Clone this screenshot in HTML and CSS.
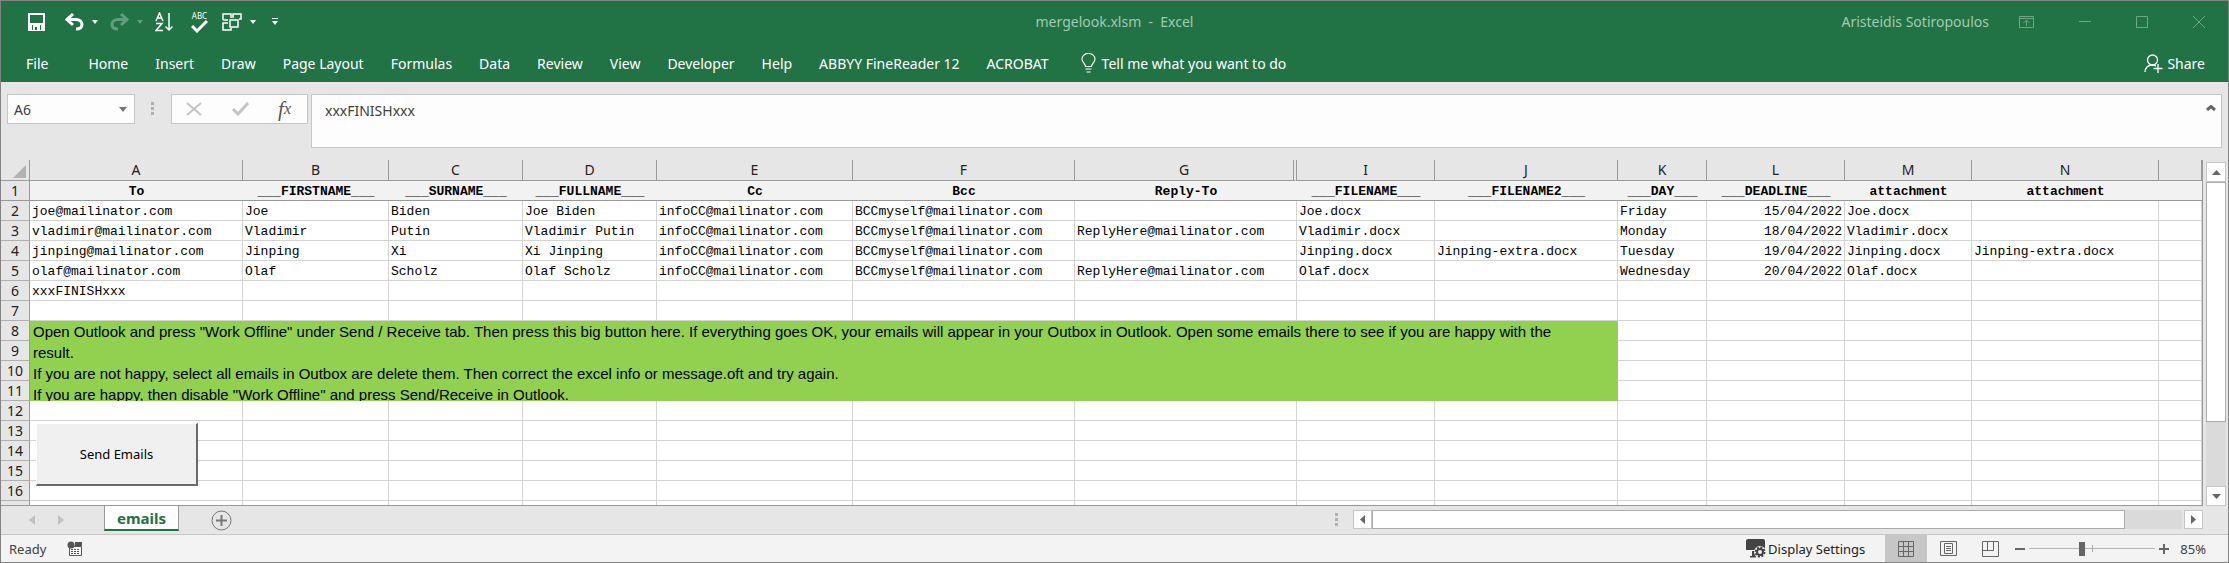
FILE: index.html
```html
<!DOCTYPE html>
<html lang="en">
<head>
<meta charset="utf-8">
<title>mergelook.xlsm - Excel</title>
<link rel="stylesheet" href="styles.css">
</head>
<body>
<div class="window">
  <header class="ribbon">
    <div class="titlebar">
      <div class="quick">
        <button class="ic" aria-label="Save"><svg width="17" height="18" viewBox="0 0 17 18" fill="none" stroke="#fff" stroke-width="2"><path d="M1 1h15v16H1z"/><path d="M2 10h13v7H2z" fill="#fff" stroke="none"/><path d="M4 12h9v5H4z" fill="#217346" stroke="none"/><path d="M5 12h7v5H9v-3H7v3H5z" fill="#fff" stroke="none"/></svg></button>
        <button class="ic undo" aria-label="Undo"><svg width="19" height="18" viewBox="0 0 19 18" fill="none" stroke="#fff" stroke-width="3"><path d="M2 6.500h9c3.500 0 6 2 6 5s-2 4.500-6 4.500"/><path d="M8 1L2 6.500l6 5.500"/></svg></button>
        <button class="caret" aria-label="Undo list"><svg width="6" height="4"><path d="M0 0h6l-3 4z" fill="#fff"/></svg></button>
        <button class="ic redo dim" aria-label="Redo"><svg width="19" height="18" viewBox="0 0 19 18" fill="none" stroke="#fff" stroke-width="3"><path d="M17 6.500H8c-3.500 0-6 2-6 5s2 4.500 6 4.500"/><path d="M11 1l6 5.500-6 5.500"/></svg></button>
        <button class="caret dim" aria-label="Redo list"><svg width="6" height="4"><path d="M0 0h6l-3 4z" fill="#fff"/></svg></button>
        <button class="ic sort" aria-label="Sort A to Z"><svg width="18" height="20" viewBox="0 0 18 20" fill="none" stroke="#fff" stroke-width="1.5"><path d="M1 9l3.500-8L8 9M2 6h5M1 11.500h6L1 18.500h7M14 1v17M10.500 14.500L14 18l3.500-3.500"/></svg></button>
        <button class="ic spell" aria-label="Spelling"><span>ABC</span><svg width="17" height="13" viewBox="0 0 17 13" fill="none" stroke="#fff" stroke-width="3"><path d="M1 6l5 5L16 1"/></svg></button>
        <button class="ic" aria-label="Switch windows"><svg width="20" height="18" viewBox="0 0 20 18" fill="none" stroke="#fff" stroke-width="1.500"><path d="M1 7V1h8v4M11 5V1h8v5h-2M8 7h8v7H8zM6 10H1v7h8v-2M1 7h5"/></svg></button>
        <button class="caret" aria-label="Window list"><svg width="6" height="4"><path d="M0 0h6l-3 4z" fill="#fff"/></svg></button>
        <button class="caret more" aria-label="Customize toolbar"><svg width="6" height="7"><path d="M0 0h6v1H0zM0 3h6l-3 4z" fill="#fff"/></svg></button>
      </div>
      <div class="doc">mergelook.xlsm&nbsp; -&nbsp; Excel</div>
      <div class="wincontrols">
        <span class="user">Aristeidis Sotiropoulos</span>
        <button aria-label="Ribbon display"><svg width="15" height="12" fill="none" stroke="#6da886"><path d="M.5.5h14v11H.5zM0 2.500h15M7.500 10V4M4.500 7l3-3 3 3"/></svg></button>
        <button aria-label="Minimize"><svg width="12" height="12" stroke="#6da886"><path d="M0 5.500h12"/></svg></button>
        <button aria-label="Maximize"><svg width="12" height="12" fill="none" stroke="#6da886"><path d="M.5.5h11v11H.5z"/></svg></button>
        <button aria-label="Close"><svg width="12" height="12" stroke="#6da886"><path d="M0 0l12 12M12 0L0 12"/></svg></button>
      </div>
    </div>
    <nav class="tabs">
      <button>File</button><button>Home</button><button>Insert</button><button>Draw</button><button>Page Layout</button><button>Formulas</button><button>Data</button><button>Review</button><button>View</button><button>Developer</button><button>Help</button><button>ABBYY FineReader 12</button><button>ACROBAT</button>
      <button class="tell"><svg width="15" height="20" viewBox="0 0 15 20" fill="none" stroke="#fff" stroke-width="1.200"><path d="M4.500 13.500c0-3-3.500-4-3.500-7.500a6.500 5.500 0 0 1 13 0c0 3.500-3.500 4.500-3.500 7.500zM4.500 16h6M5.500 19h4"/></svg>Tell me what you want to do</button>
      <button class="share"><svg width="19" height="19" viewBox="0 0 19 19" fill="none" stroke="#fff" stroke-width="1.300"><circle cx="8.500" cy="6" r="5"/><path d="M1 18c0-4 3-7 7-7 2 0 3 .5 4 1M14 10v9M9.500 14.500h9"/></svg>Share</button>
    </nav>
  </header>
  <section class="formulabar">
    <div class="namebox"><input aria-label="Name box" value="A6"><svg width="8" height="5"><path d="M0 0h8L4 5z" fill="#777"/></svg></div>
    <div class="grip"><i></i><i></i><i></i></div>
    <div class="fxbox">
      <button aria-label="Cancel"><svg width="16" height="14" fill="none" stroke="#c4c4c4" stroke-width="2"><path d="M1 1l14 12M15 1L1 13"/></svg></button>
      <button aria-label="Enter"><svg width="17" height="14" fill="none" stroke="#c4c4c4" stroke-width="3"><path d="M1 7l5 5L16 1"/></svg></button>
      <button class="fx" aria-label="Insert function">f<sub>x</sub></button>
    </div>
    <div class="formula"><input aria-label="Formula" value="xxxFINISHxxx"><svg width="10" height="6" fill="none" stroke="#666" stroke-width="3"><path d="M1 5l4-3.500L9 5"/></svg></div>
  </section>
  <main class="main">
    <div class="sheet">
      <table class="grid">
        <colgroup><col class="c0"><col class="ca"><col class="cb"><col class="cc"><col class="cc"><col class="ce"><col class="cf"><col class="cf"><col class="ci"><col class="cj"><col class="ck"><col class="ci"><col class="cm"><col class="cn"><col></colgroup>
        <thead>
          <tr class="letters"><th class="corner"><svg width="13" height="13"><path d="M13 0v13H0z" fill="#b2b2b2"/></svg></th><th>A</th><th>B</th><th>C</th><th>D</th><th>E</th><th>F</th><th class="hid">G</th><th>I</th><th>J</th><th>K</th><th>L</th><th>M</th><th>N</th><th></th></tr>
          <tr class="names"><th>1</th><th>To</th><th>___FIRSTNAME___</th><th>___SURNAME___</th><th>___FULLNAME___</th><th>Cc</th><th>Bcc</th><th>Reply-To</th><th>___FILENAME___</th><th>___FILENAME2___</th><th>___DAY___</th><th>___DEADLINE___</th><th>attachment</th><th>attachment</th><th></th></tr>
        </thead>
        <tbody>
          <tr><th>2</th><td>joe@mailinator.com</td><td>Joe</td><td>Biden</td><td>Joe Biden</td><td>infoCC@mailinator.com</td><td>BCCmyself@mailinator.com</td><td></td><td>Joe.docx</td><td></td><td>Friday</td><td class="r">15/04/2022</td><td>Joe.docx</td><td></td><td></td></tr>
          <tr><th>3</th><td>vladimir@mailinator.com</td><td>Vladimir</td><td>Putin</td><td>Vladimir Putin</td><td>infoCC@mailinator.com</td><td>BCCmyself@mailinator.com</td><td>ReplyHere@mailinator.com</td><td>Vladimir.docx</td><td></td><td>Monday</td><td class="r">18/04/2022</td><td>Vladimir.docx</td><td></td><td></td></tr>
          <tr><th>4</th><td>jinping@mailinator.com</td><td>Jinping</td><td>Xi</td><td>Xi Jinping</td><td>infoCC@mailinator.com</td><td>BCCmyself@mailinator.com</td><td></td><td>Jinping.docx</td><td>Jinping-extra.docx</td><td>Tuesday</td><td class="r">19/04/2022</td><td>Jinping.docx</td><td>Jinping-extra.docx</td><td></td></tr>
          <tr><th>5</th><td>olaf@mailinator.com</td><td>Olaf</td><td>Scholz</td><td>Olaf Scholz</td><td>infoCC@mailinator.com</td><td>BCCmyself@mailinator.com</td><td>ReplyHere@mailinator.com</td><td>Olaf.docx</td><td></td><td>Wednesday</td><td class="r">20/04/2022</td><td>Olaf.docx</td><td></td><td></td></tr>
          <tr><th>6</th><td>xxxFINISHxxx</td><td></td><td></td><td></td><td></td><td></td><td></td><td></td><td></td><td></td><td></td><td></td><td></td><td></td></tr>
          <tr><th>7</th><td></td><td></td><td></td><td></td><td></td><td></td><td></td><td></td><td></td><td></td><td></td><td></td><td></td><td></td></tr>
          <tr><th>8</th><td class="note" colspan="9" rowspan="4"><div>Open Outlook and press "Work Offline" under Send / Receive tab. Then press this big button here. If everything goes OK, your emails will appear in your Outbox in Outlook. Open some emails there to see if you are happy with the<br>result.<br>If you are not happy, select all emails in Outbox are delete them. Then correct the excel info or message.oft and try again.<br>If you are happy, then disable "Work Offline" and press Send/Receive in Outlook.</div></td><td></td><td></td><td></td><td></td><td></td></tr>
          <tr><th>9</th><td></td><td></td><td></td><td></td><td></td></tr>
          <tr><th>10</th><td></td><td></td><td></td><td></td><td></td></tr>
          <tr><th>11</th><td></td><td></td><td></td><td></td><td></td></tr>
          <tr><th>12</th><td></td><td></td><td></td><td></td><td></td><td></td><td></td><td></td><td></td><td></td><td></td><td></td><td></td><td></td></tr>
          <tr><th>13</th><td class="anchor"><button class="send">Send Emails</button></td><td></td><td></td><td></td><td></td><td></td><td></td><td></td><td></td><td></td><td></td><td></td><td></td><td></td></tr>
          <tr><th>14</th><td></td><td></td><td></td><td></td><td></td><td></td><td></td><td></td><td></td><td></td><td></td><td></td><td></td><td></td></tr>
          <tr><th>15</th><td></td><td></td><td></td><td></td><td></td><td></td><td></td><td></td><td></td><td></td><td></td><td></td><td></td><td></td></tr>
          <tr><th>16</th><td></td><td></td><td></td><td></td><td></td><td></td><td></td><td></td><td></td><td></td><td></td><td></td><td></td><td></td></tr>
          <tr><th></th><td></td><td></td><td></td><td></td><td></td><td></td><td></td><td></td><td></td><td></td><td></td><td></td><td></td><td></td></tr>
        </tbody>
      </table>
    </div>
    <div class="vscroll">
      <button aria-label="Scroll up"><svg width="9" height="5"><path d="M0 5h9L4.500 0z" fill="#666"/></svg></button>
      <div class="track"><div class="thumb"></div></div>
      <button aria-label="Scroll down"><svg width="9" height="5"><path d="M0 0h9L4.500 5z" fill="#666"/></svg></button>
    </div>
  </main>
  <div class="sheetbar">
    <button class="nav" aria-label="Previous sheet"><svg width="6" height="10"><path d="M6 0v10L0 5z" fill="#c0c0c0"/></svg></button>
    <button class="nav" aria-label="Next sheet"><svg width="6" height="10"><path d="M0 0v10l6-5z" fill="#c0c0c0"/></svg></button>
    <button class="sheettab">emails</button>
    <button class="add" aria-label="New sheet"><svg width="21" height="21" fill="none" stroke="#777"><circle cx="10.500" cy="10.500" r="9.500"/><path d="M10.500 5v11M5 10.500h11" stroke-width="2"/></svg></button>
    <div class="grip"><i></i><i></i><i></i></div>
    <div class="hscroll">
      <button aria-label="Scroll left"><svg width="5" height="9"><path d="M5 0v9L0 4.500z" fill="#666"/></svg></button>
      <div class="track"><div class="thumb"></div></div>
      <button aria-label="Scroll right"><svg width="5" height="9"><path d="M0 0v9l5-4.500z" fill="#666"/></svg></button>
    </div>
  </div>
  <footer class="status">
    <span class="ready">Ready</span>
    <button aria-label="Record macro"><svg width="16" height="16" viewBox="0 0 16 16"><path d="M2.500 5.500h12v9h-12z" fill="#fff" stroke="#555"/><path d="M8 1h7v4H8z" fill="#555"/><circle cx="4" cy="4" r="3.500" fill="#555"/><path d="M4 8.500h9M4 10.500h9M4 12.500h9" stroke="#555" stroke-dasharray="2 1"/></svg></button>
    <button class="display"><svg width="20" height="19" viewBox="0 0 20 19"><path d="M2 0h15q2 0 2 2v9H0V2q0-2 2-2zM4 17h6v1.500H4zM6 12h3v5H6z" fill="#444"/><circle cx="14" cy="13" r="6" fill="#f3f3f3"/><circle cx="14" cy="13" r="3" fill="none" stroke="#444" stroke-width="2"/><circle cx="14" cy="13" r="4.500" fill="none" stroke="#444" stroke-width="2" stroke-dasharray="2 1.500"/></svg>Display Settings</button>
    <button class="view on" aria-label="Normal"><svg width="16" height="16" fill="none" stroke="#666"><path d="M.5.5h15v15H.5zM5.500 0v16M10.500 0v16M0 5.500h16M0 10.500h16"/></svg></button>
    <button class="view" aria-label="Page layout"><svg width="17" height="16" fill="none" stroke="#666"><path d="M.5.5h16v14H.5zM4.500 2.500h8v10h-8zM6 5.500h5M6 7.500h5M6 9.500h5"/></svg></button>
    <button class="view" aria-label="Page break"><svg width="17" height="16" fill="none" stroke="#666"><path d="M.5.5h16v15H.5zM5.500 0v9.500M11.500 0v9.500M0 9.500h11.500"/></svg></button>
    <div class="zoom">
      <button aria-label="Zoom out"><svg width="10" height="10"><path d="M0 4h10v2H0z" fill="#666"/></svg></button>
      <input type="range" min="10" max="190" value="85" aria-label="Zoom">
      <button aria-label="Zoom in"><svg width="10" height="10"><path d="M0 4h10v2H0zM4 0h2v10H4z" fill="#666"/></svg></button>
      <span>85%</span>
    </div>
  </footer>
</div>
</body>
</html>
```
FILE: styles.css
```css
* { box-sizing: border-box; }
body {
  margin: 0;
  font-family: "Noto Sans", "Open Sans", sans-serif;
  font-size: 14px;
  color: #262626;
}
button {
  font: inherit;
  color: inherit;
  background: none;
  border: 0;
  padding: 0;
  display: flex;
  align-items: center;
  justify-content: center;
}
input { font: inherit; color: inherit; border: 0; background: none; padding: 0; min-width: 0; }
svg { display: block; flex: none; }

.window {
  display: flex;
  flex-direction: column;
  min-height: 100vh;
  border: 1px solid #838383;
  background: #e6e6e6;
}

.ribbon { background: #217346; color: #fff; }
.titlebar { display: grid; grid-template-columns: 1fr auto 1fr; height: 41px; align-items: center; }
.quick { display: flex; align-items: center; padding-left: 27px; }
.undo { margin-left: 20px; }
.caret { margin-left: 8px; }
.redo { margin-left: 12px; }
.dim { opacity: .3; }
.sort { margin-left: 12px; }
.spell { flex-direction: column; font-size: 8px; line-height: 9px; margin: 0 14px 0 18px; }
.more { margin-left: 16px; }
.doc { color: #a2c9b1; }
.wincontrols { display: flex; justify-content: flex-end; align-items: center; padding-right: 23px; color: #a2c9b1; }
.user { margin-right: 30px; }
.wincontrols button { margin-left: 45px; }
.wincontrols .user + button { margin-left: 0; }
.tabs { display: flex; align-items: center; height: 40px; padding: 2px 23px 0 25px; gap: 27px; white-space: nowrap; }
.tabs button:first-child { margin-right: 13px; }
.tabs .tell { gap: 6px; margin-left: 5px; }
.tabs .share { margin-left: auto; gap: 4px; }

.formulabar { display: flex; align-items: flex-start; padding: 12px 6px; color: #404040; }
.namebox, .fxbox, .formula { background: #fdfdfd; border: 1px solid #c6c6c6; display: flex; }
.namebox { width: 128px; height: 30px; align-items: center; padding: 0 7px 0 6px; }
.namebox input { flex: 1; }
.grip { display: flex; flex-direction: column; gap: 2px; }
.grip i { width: 3px; height: 3px; background: #b0b0b0; }
.formulabar .grip { margin: 8px 17px 0 16px; }
.fxbox { width: 137px; height: 30px; align-items: center; justify-content: space-between; padding: 0 16px 0 14px; }
.fx { font: italic 21px "Liberation Serif", serif; color: #555; }
.fx sub { font-size: 16px; line-height: 1; }
.formula { flex: 1; height: 54px; margin-left: 3px; padding: 4px 5px 0 13px; }
.formula input { flex: 1; height: 22px; }
.formula svg { margin-top: 6px; }

.main { display: flex; height: 346px; }
.sheet { flex: 1; overflow: hidden; border: solid #999; border-width: 0 1px 1px 0; }
.grid { width: 100%; table-layout: fixed; border-collapse: separate; border-spacing: 0; background: #fff; font-family: "Liberation Mono", monospace; font-size: 13px; color: #000; }
.c0 { width: 29px; }
.ca { width: 213px; }
.cb { width: 146px; }
.cc { width: 134px; }
.ce { width: 196px; }
.cf { width: 222px; }
.ci { width: 138px; }
.cj { width: 183px; }
.ck { width: 89px; }
.cm { width: 127px; }
.cn { width: 187px; }
.grid th, .grid td { height: 20px; padding: 2px 2px 0; line-height: 17px; border: solid #d4d4d4; border-width: 0 1px 1px 0; white-space: nowrap; text-align: left; font-weight: 400; }
.grid th:first-child { background: #e6e6e6; font: 14px/19px "Noto Sans", sans-serif; text-align: center; border-color: #b0b0b0; border-right-color: #999; padding: 0; color: #222; }
.grid .letters th { height: 21px; background: #e6e6e6; font: 14px/20px "Noto Sans", sans-serif; text-align: center; border-color: #999; padding: 0; color: #222; }
.letters .corner svg { margin: 3px 0 0 12px; }
.grid .letters .hid { border-right: 4px double #999; }
.grid .names th { background: #f2f2f2; border-width: 0 0 1px; border-color: #999; text-align: center; font-weight: 700; }
.grid .names th:first-child { border-right-width: 1px; background: #e6e6e6; font-weight: 400; }
.grid .r { text-align: right; }
.grid .note { background: #92d050; border: 0; padding: 0 3px; vertical-align: top; font: 15px/21px "Liberation Sans", sans-serif; }
.note div { height: 80px; overflow: hidden; }
.grid .anchor { position: relative; overflow: visible; }
.send { position: absolute; left: 6px; top: 2px; width: 162px; height: 63px; background: #f0f0f0; border: solid; border-width: 1px 2px 2px 1px; border-color: #fff #696969 #696969 #fff; font: 13px "Noto Sans", sans-serif; }

.vscroll { display: flex; flex-direction: column; width: 25px; padding: 2px 2px 0 3px; }
.vscroll button { width: 20px; height: 20px; }
.vscroll button, .hscroll button { background: #fff; border: 1px solid #c6c6c6; flex: none; }
.track { flex: 1; background: #dadada; }
.thumb { background: #fff; border: 1px solid #ababab; }
.vscroll .thumb { height: 79%; }

.sheetbar { display: flex; height: 29px; border-bottom: 1px solid #c6c6c6; padding-left: 28px; }
.nav { margin-right: 23px; }
.sheettab { width: 75px; height: 25px; margin-left: 17px; background: #fff; border: solid #999; border-width: 0 1px 2px; border-bottom-color: #217346; color: #217346; font-weight: 700; font-size: 15px; line-height: 20px; }
.add { margin-left: 32px; }
.sheetbar .grip { margin: 7px 15px 0 auto; }
.hscroll { display: flex; width: 850px; height: 19px; margin: 4px 25px 0 0; }
.hscroll button { width: 19px; }
.hscroll .track { margin-right: 2px; }
.hscroll .thumb { height: 100%; width: 93%; }

.status { display: flex; flex: 1; min-height: 27px; background: #f3f3f3; align-items: stretch; padding: 0 22px 0 8px; color: #404040; font-size: 13px; }
.ready { align-self: center; margin-right: 21px; }
.display { margin-left: auto; gap: 2px; color: #222; margin-right: 20px; }
.view { width: 42px; }
.view.on { background: #c6c6c6; }
.zoom { display: flex; align-items: center; margin-left: 4px; }
.zoom input { appearance: none; width: 126px; height: 16px; margin: 0 4px; background: linear-gradient(#aaa, #aaa) center / 1px 7px no-repeat, linear-gradient(#b4b4b4, #b4b4b4) center / 100% 1px no-repeat; }
.zoom input::-webkit-slider-thumb { appearance: none; width: 6px; height: 14px; background: #666; }
.zoom span { margin-left: 11px; }
```
